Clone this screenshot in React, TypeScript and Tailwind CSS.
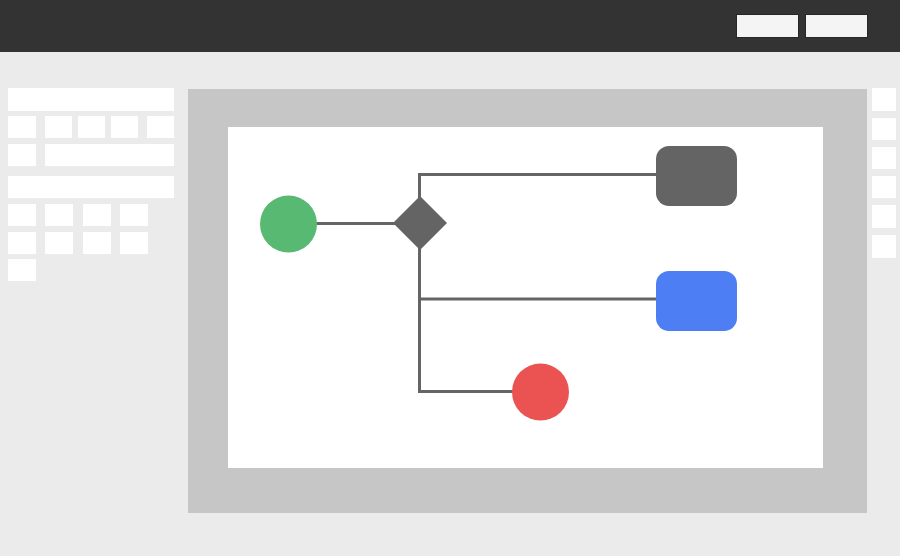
import React from "react";

const Box = ({ w, ml = 0 }: { w: number | string; ml?: number }) => null;

export default function App() {
  return (
    <div className="w-[900px] h-[556px] bg-[#ebebeb] overflow-hidden flex flex-col" style={{ fontFamily: '"Liberation Sans", sans-serif' }}>
      <div className="h-[52px] bg-[#333333] flex items-center justify-end pr-[33px] gap-[8px] shrink-0">
        <div className="w-[61px] h-[22px] bg-[#f4f4f4] shadow-[0_0_0_1px_rgba(0,0,0,0.25)]" />
        <div className="w-[61px] h-[22px] bg-[#f4f4f4] shadow-[0_0_0_1px_rgba(0,0,0,0.25)]" />
      </div>
      <div className="flex flex-row">
        {/* Left sidebar */}
        <div className="w-[166px] ml-[8px] mt-[36px] flex flex-col shrink-0">
          <div className="h-[23px] bg-white" />
          <div className="h-[22px] mt-[5px] flex">
            <div className="w-[28px] bg-white" />
            <div className="w-[27px] ml-[9px] bg-white" />
            <div className="w-[27px] ml-[6px] bg-white" />
            <div className="w-[27px] ml-[6px] bg-white" />
            <div className="w-[27px] ml-[9px] bg-white" />
          </div>
          <div className="h-[22px] mt-[6px] flex">
            <div className="w-[28px] bg-white" />
            <div className="flex-1 ml-[9px] bg-white" />
          </div>
          <div className="h-[22px] mt-[10px] bg-white" />
          <div className="h-[22px] mt-[6px] flex">
            <div className="w-[28px] bg-white" />
            <div className="w-[28px] ml-[9px] bg-white" />
            <div className="w-[28px] ml-[10px] bg-white" />
            <div className="w-[28px] ml-[9px] bg-white" />
          </div>
          <div className="h-[22px] mt-[6px] flex">
            <div className="w-[28px] bg-white" />
            <div className="w-[28px] ml-[9px] bg-white" />
            <div className="w-[28px] ml-[10px] bg-white" />
            <div className="w-[28px] ml-[9px] bg-white" />
          </div>
          <div className="h-[22px] mt-[5px] flex">
            <div className="w-[28px] bg-white" />
          </div>
        </div>

        {/* Main panel */}
        <div className="w-[679px] h-[424px] ml-[14px] mt-[37px] bg-[#c6c6c6] pl-[40px] pt-[38px] shrink-0">
          <div className="w-[595px] h-[341px] bg-white">
            <svg width="595" height="341" viewBox="0 0 595 341">
              <g stroke="#656565" strokeWidth="3" fill="none">
                <line x1="60" y1="96.5" x2="192" y2="96.5" />
                <polyline points="428,47.5 191.5,47.5 191.5,264.5 312,264.5" />
                <line x1="191.5" y1="172" x2="428" y2="172" />
              </g>
              <circle cx="60.5" cy="97" r="28.5" fill="#58b973" />
              <polygon points="192,69 219,96 192,123 165,96" fill="#646464" />
              <rect x="428" y="19" width="81" height="60" rx="13" fill="#646464" />
              <rect x="428" y="144" width="81" height="60" rx="13" fill="#4e7ef3" />
              <circle cx="312.5" cy="265" r="28.5" fill="#eb5353" />
            </svg>
          </div>
        </div>

        {/* Right column */}
        <div className="ml-[5px] mt-[36px] w-[24px] flex flex-col gap-[7px] shrink-0">
          <div className="h-[23px] bg-white" />
          <div className="h-[22px] bg-white" />
          <div className="h-[22px] bg-white" />
          <div className="h-[22px] bg-white" />
          <div className="h-[23px] bg-white" />
          <div className="h-[23px] bg-white" />
        </div>
      </div>
    </div>
  );
}
